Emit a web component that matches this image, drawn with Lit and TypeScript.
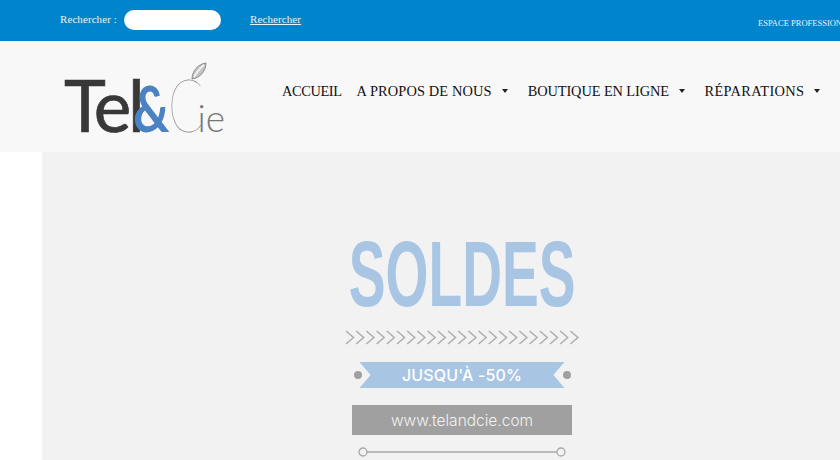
import { LitElement, html, css, svg } from "lit";
import { customElement } from "lit/decorators.js";

@customElement("app-root")
export class AppRoot extends LitElement {
  static styles = css`
    :host { display: block; width: 840px; height: 460px; overflow: hidden; background: #fff; font-family: "Liberation Serif", serif; }
    .top { height: 41px; background: #0085cc; color: #fff; display: flex; align-items: flex-start; padding-left: 60px; white-space: nowrap; overflow: hidden; }
    .top > * { flex: none; }
    .lab { font-size: 11px; margin-top: 13px; line-height: 13px; width: 64px; color: #e8f4fb; letter-spacing: .08px; }
    .inp { width: 97px; height: 20px; margin-top: 10px; background: #fff; border-radius: 10px; }
    .lnk { font-size: 11px; margin: 13px 0 0 29px; line-height: 13px; text-decoration: underline; color: #e8f4fb; width: 508px; letter-spacing: .1px; }
    .esp { font-size: 8.5px; line-height: 10px; margin-top: 18px; color: #e8f4fb; }
    .head { height: 111px; background: #f8f8f8; display: flex; padding-left: 64px; box-sizing: border-box; white-space: nowrap; overflow: hidden; }
    .head > * { flex: none; }
    .logo { width: 218px; height: 111px; position: relative; display: flex; align-items: baseline; font-family: Lato, sans-serif; line-height: 1; padding-top: 26px; box-sizing: border-box; }
    .t { font-size: 71px; color: #383838; font-weight: 400; letter-spacing: -3.4px; -webkit-text-stroke: .7px #383838; }
    .a { display: inline-block; font-size: 63px; color: #4a82c3; font-weight: 700; margin-left: -8px; margin-right: -11px; transform: scaleX(.8); transform-origin: left; }
    .c { display: inline-block; font-size: 74px; color: #8a8a8a; font-weight: 100; margin-right: -17px; transform: scaleX(.7); transform-origin: left; }
    .ie { font-size: 37px; color: #777; font-weight: 300; margin-left: -4px; }
    .leaf { position: absolute; left: 126px; top: 20px; }
    .nav { display: flex; align-items: center; height: 100px; font-size: 14.4px; color: #111; }
    .item { display: flex; align-items: center; }
    .i1 { margin-right: 15px; letter-spacing: -.4px; }
    .i2 { margin-right: 20px; letter-spacing: .12px; }
    .i3 { margin-right: 20px; letter-spacing: -.1px; }
    .i4 { letter-spacing: .33px; }
    .tri { width: 0; height: 0; border-left: 3px solid transparent; border-right: 3px solid transparent; border-top: 4px solid #222; margin-left: 10px; }
    .i3 .tri { margin-left: 9.5px; }
    .hero { margin-left: 42px; width: 840px; height: 308px; background: #f2f2f2; display: flex; flex-direction: column; align-items: center; }
    .soldes { height: 90px; margin-top: 82px; margin-bottom: 7px; font-family: "Liberation Sans", sans-serif; font-weight: 700; font-size: 92px; line-height: 80px; color: #a9c5e4; transform: scaleX(.6); white-space: nowrap; }
    .chev { display: block; margin-top: -1px; }
    .rib { margin-top: 17px; display: flex; align-items: center; }
    .dot { width: 8px; height: 8px; border-radius: 50%; background: #a0a0a0; }
    .band { width: 205px; height: 26px; margin: 0 -2px; background: #a9c5e4; clip-path: polygon(0 0, 100% 0, 94.6% 50%, 100% 100%, 0 100%, 5.4% 50%); color: #fff; font-family: Inter, sans-serif; font-weight: 500; font-size: 16px; line-height: 27px; text-align: center; letter-spacing: .15px; }
    .url { margin-top: 17px; width: 220px; height: 30px; background: #a0a0a0; color: #f2f2f2; font-family: Inter, sans-serif; font-weight: 300; font-size: 15.5px; line-height: 31px; text-align: center; }
    .ln { display: block; margin-top: 12px; }
  `;

  render() {
    const n = 23;
    const chevs = Array.from({ length: n }, (_, i) => {
      const x = 2 + i * 10.2;
      return svg`<polyline points="${x},1 ${x + 7.5},7.5 ${x},14" />`;
    });
    return html`
      <div class="top">
        <span class="lab">Rechercher :</span>
        <span class="inp"></span>
        <span class="lnk">Rechercher</span>
        <span class="esp">ESPACE PROFESSIONNEL</span>
      </div>
      <div class="head">
        <div class="logo">
          <span class="t">Tel</span><span class="a">&amp;</span><span class="c">C</span><span class="ie">ie</span>
          <svg class="leaf" width="18" height="20" viewBox="0 0 18 20">
            <path d="M2 18 C2 10 8 3 16 2 C16 10 10 17 2 18 Z" fill="#c4c4c4" stroke="#777" stroke-width=".8"/>
            <path d="M4 16 C7 11 10 7 14 4" fill="none" stroke="#f6f6f6" stroke-width="1.6"/>
          </svg>
        </div>
        <div class="nav">
          <span class="item i1">ACCUEIL</span>
          <span class="item i2">A PROPOS DE NOUS<i class="tri"></i></span>
          <span class="item i3">BOUTIQUE EN LIGNE<i class="tri"></i></span>
          <span class="item i4">RÉPARATIONS<i class="tri"></i></span>
        </div>
      </div>
      <div class="hero">
        <div class="soldes">SOLDES</div>
        <svg class="chev" width="236" height="15" viewBox="0 0 236 15" fill="none" stroke="#adadad" stroke-width="1.5">${chevs}</svg>
        <div class="rib">
          <span class="dot"></span>
          <div class="band">JUSQU'À -50%</div>
          <span class="dot"></span>
        </div>
        <div class="url">www.telandcie.com</div>
        <svg class="ln" width="208" height="10" viewBox="0 0 208 10" fill="none" stroke="#a8a8a8" stroke-width="1.3">
          <circle cx="5" cy="5" r="4"/><line x1="9" y1="5" x2="199" y2="5"/><circle cx="203" cy="5" r="4"/>
        </svg>
      </div>
    `;
  }
}
